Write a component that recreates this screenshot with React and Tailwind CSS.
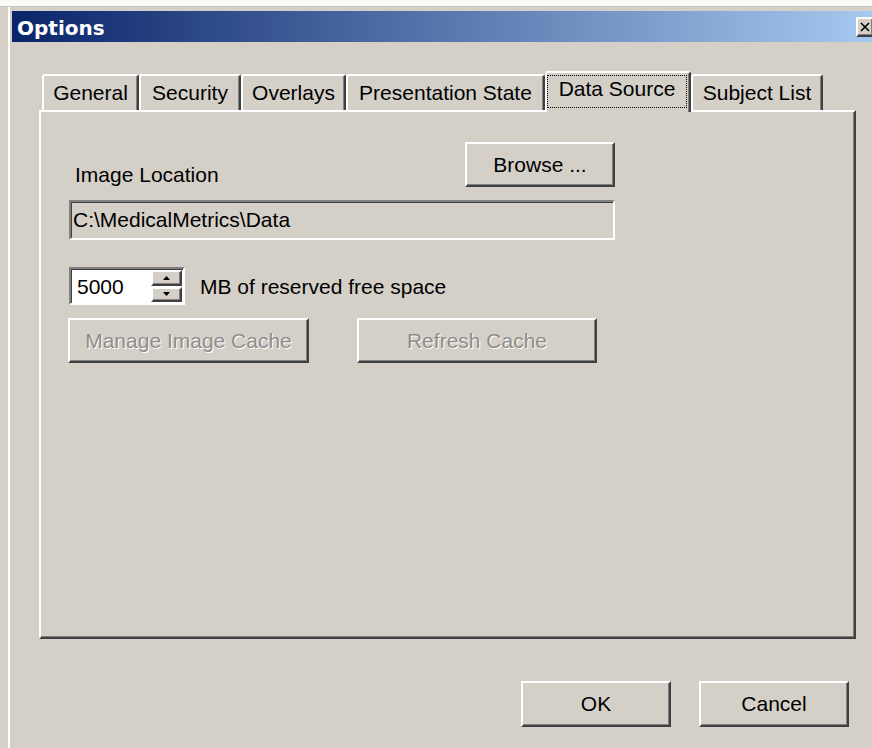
import React from "react";

// Classic 3D edges
const raised =
  "border-t-2 border-l-2 border-r-2 border-b-2 border-t-white border-l-white border-r-[#404040] border-b-[#404040] shadow-[inset_-1px_-1px_0_#808080]";
const sunken =
  "border-2 border-t-[#808080] border-l-[#808080] border-r-white border-b-white shadow-[inset_1px_1px_0_#404040]";

const tabs = [
  { label: "General", w: "w-[97px]" },
  { label: "Security", w: "w-[102px]" },
  { label: "Overlays", w: "w-[105px]" },
  { label: "Presentation State", w: "w-[199px]" },
  { label: "Data Source", w: "w-[146px]", active: true },
  { label: "Subject List", w: "w-[132px]" },
];

function Button({ children, className = "", disabled = false }) {
  return (
    <div
      className={`${raised} flex items-center justify-center bg-[#d4d0c8] ${className}`}
    >
      <span
        className={
          disabled
            ? "text-[#8f8d88] [text-shadow:1px_1px_0_#ffffff]"
            : "text-black"
        }
      >
        {children}
      </span>
    </div>
  );
}

function Tab({ label, w, active }) {
  if (active) {
    return (
      <div
        className={`${w} relative z-10 h-[41px] -mb-[2px] bg-[#d4d0c8] border-t-2 border-l-2 border-r-2 border-t-white border-l-white border-r-[#404040] shadow-[inset_-1px_0_0_#808080] rounded-t-[3px] pt-[2px] pr-[2px]`}
      >
        <div className="h-[33px] border border-dotted border-black flex justify-center pt-[1px] whitespace-nowrap">
          {label}
        </div>
      </div>
    );
  }
  return (
    <div
      className={`${w} h-[36px] border-t-2 border-l-2 border-r-2 border-t-white border-l-white border-r-[#404040] shadow-[inset_-1px_0_0_#808080] rounded-t-[3px] flex justify-center pt-[5px] whitespace-nowrap`}
    >
      {label}
    </div>
  );
}

function Spinner() {
  return (
    <div className={`${sunken} w-[116px] h-[38px] bg-white flex`}>
      <div className="flex-1 flex items-center pl-[6px] pt-[2px]">5000</div>
      <div className="w-[32px] flex flex-col gap-[1px] pr-[1px] py-[1px]">
        <div className={`${raised} bg-[#d4d0c8] flex-1 flex items-center justify-center`}>
          <svg width="7" height="4" viewBox="0 0 7 4">
            <path d="M3.5 0 L7 4 L0 4 Z" fill="#000" />
          </svg>
        </div>
        <div className={`${raised} bg-[#d4d0c8] flex-1 flex items-center justify-center`}>
          <svg width="7" height="4" viewBox="0 0 7 4">
            <path d="M0 0 L7 0 L3.5 4 Z" fill="#000" />
          </svg>
        </div>
      </div>
    </div>
  );
}

export default function App() {
  return (
    <div className="w-[872px] h-[748px] overflow-hidden bg-[#d4d0c8] font-['Liberation_Sans',Arial,sans-serif] text-black text-[21px] leading-[24px] flex flex-col">
      <div className="h-[7px] shrink-0 bg-[#fbfbfa] border-b border-[#c9c6c0]" />
      <div className="flex-1 ml-[8px] border-l-2 border-l-white pl-[2px] pt-[4px]">
        <div className="w-[866px] flex flex-col">
          {/* Title bar */}
          <div className="h-[31px] bg-[linear-gradient(to_right,#0a246a,#a6caf0)] flex items-center justify-between pl-[5px] pr-[4px]">
            <span className="font-['DejaVu_Sans',sans-serif] font-bold text-[20px] leading-[24px] text-white pt-[3px]">
              Options
            </span>
            <div className={`${raised} w-[18px] h-[20px] bg-[#d4d0c8] flex items-center justify-center`}>
              <svg width="10" height="10" viewBox="0 0 10 10">
                <path d="M1 1 L9 9 M9 1 L1 9" stroke="#000" strokeWidth="1.6" />
              </svg>
            </div>
          </div>

          {/* Tabs */}
          <div className="mt-[29px] ml-[30px] flex items-end">
            {tabs.map((t) => (
              <Tab key={t.label} {...t} />
            ))}
          </div>

          {/* Tab page */}
          <div className="ml-[27px] w-[817px] h-[529px] border-t-2 border-l-2 border-r-2 border-b-2 border-t-white border-l-white border-r-[#404040] border-b-[#404040] shadow-[inset_-1px_-1px_0_#808080] pt-[30px] pl-[28px]">
            <div className="w-[546px] flex flex-col">
              <div className="flex items-end justify-between">
                <span className="pl-[6px]">Image Location</span>
                <Button className="w-[150px] h-[45px]">Browse ...</Button>
              </div>
              <div className={`${sunken} mt-[13px] h-[40px] flex items-center pl-[2px] whitespace-nowrap`}>
                C:\MedicalMetrics\Data
              </div>
              <div className="mt-[27px] flex items-center">
                <Spinner />
                <span className="ml-[15px] pt-[2px]">MB of reserved free space</span>
              </div>
              <div className="mt-[13px] flex gap-[48px] -ml-[1px]">
                <Button disabled className="w-[241px] h-[45px]">
                  Manage Image Cache
                </Button>
                <Button disabled className="w-[240px] h-[45px]">
                  Refresh Cache
                </Button>
              </div>
            </div>
          </div>

          {/* Dialog buttons */}
          <div className="mt-[42px] ml-[509px] flex gap-[28px]">
            <Button className="w-[150px] h-[46px]">OK</Button>
            <Button className="w-[150px] h-[46px]">Cancel</Button>
          </div>
        </div>
      </div>
    </div>
  );
}
